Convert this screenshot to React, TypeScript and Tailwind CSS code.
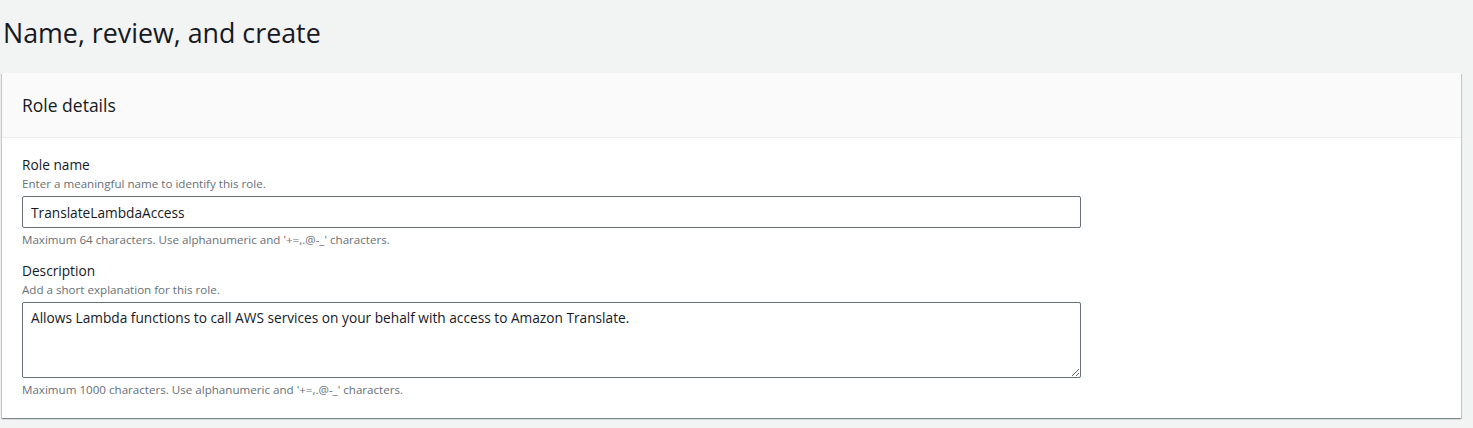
const FONT = "font-['Open_Sans',sans-serif]";

function Field({
  label,
  hint,
  constraint,
  children,
}: {
  label: string;
  hint: string;
  constraint: string;
  children: React.ReactNode;
}) {
  return (
    <div className="flex flex-col">
      <label className="text-[13.7px] leading-[22px] text-[#16191f]">{label}</label>
      <p className="text-[11.6px] leading-[16px] text-[#687078]">{hint}</p>
      <div className="mt-[4px]">{children}</div>
      <p className="mt-[4px] text-[11.6px] leading-[16px] text-[#687078]">{constraint}</p>
    </div>
  );
}

export default function App() {
  return (
    <div className={`min-h-[428px] bg-[#f2f3f3] ${FONT}`}>
      <h1 className="px-[3px] pt-[15px] text-[26.8px] leading-[36px] text-[#16191f]">
        Name, review, and create
      </h1>
      <div className="ml-[2px] mt-[22px] w-[1459px] bg-white shadow-[0_1px_1px_0_rgba(0,28,36,0.3),1px_1px_1px_0_rgba(0,28,36,0.15),-1px_1px_1px_0_rgba(0,28,36,0.15)]">
        <div className="border-b border-[#eaeded] bg-[#fafafa] px-[20px] py-[20px]">
          <h2 className="text-[17.5px] leading-[24px] text-[#16191f]">Role details</h2>
        </div>
        <div className="flex flex-col gap-[12px] px-[20px] pb-[20px] pt-[16px]">
          <Field
            label="Role name"
            hint="Enter a meaningful name to identify this role."
            constraint="Maximum 64 characters. Use alphanumeric and '+=,.@-_' characters."
          >
            <input
              readOnly
              value="TranslateLambdaAccess"
              className="h-[32px] w-[1059px] rounded-[2px] border border-[#687078] bg-white px-[8px] text-[13.7px] text-[#16191f] outline-none"
            />
          </Field>
          <Field
            label="Description"
            hint="Add a short explanation for this role."
            constraint="Maximum 1000 characters. Use alphanumeric and '+=,.@-_' characters."
          >
            <textarea
              readOnly
              value="Allows Lambda functions to call AWS services on your behalf with access to Amazon Translate."
              className="block h-[76px] w-[1059px] rounded-[2px] border border-[#687078] bg-white px-[8px] py-[4px] text-[13.7px] leading-[22px] text-[#16191f] outline-none"
            />
          </Field>
        </div>
      </div>
    </div>
  );
}
